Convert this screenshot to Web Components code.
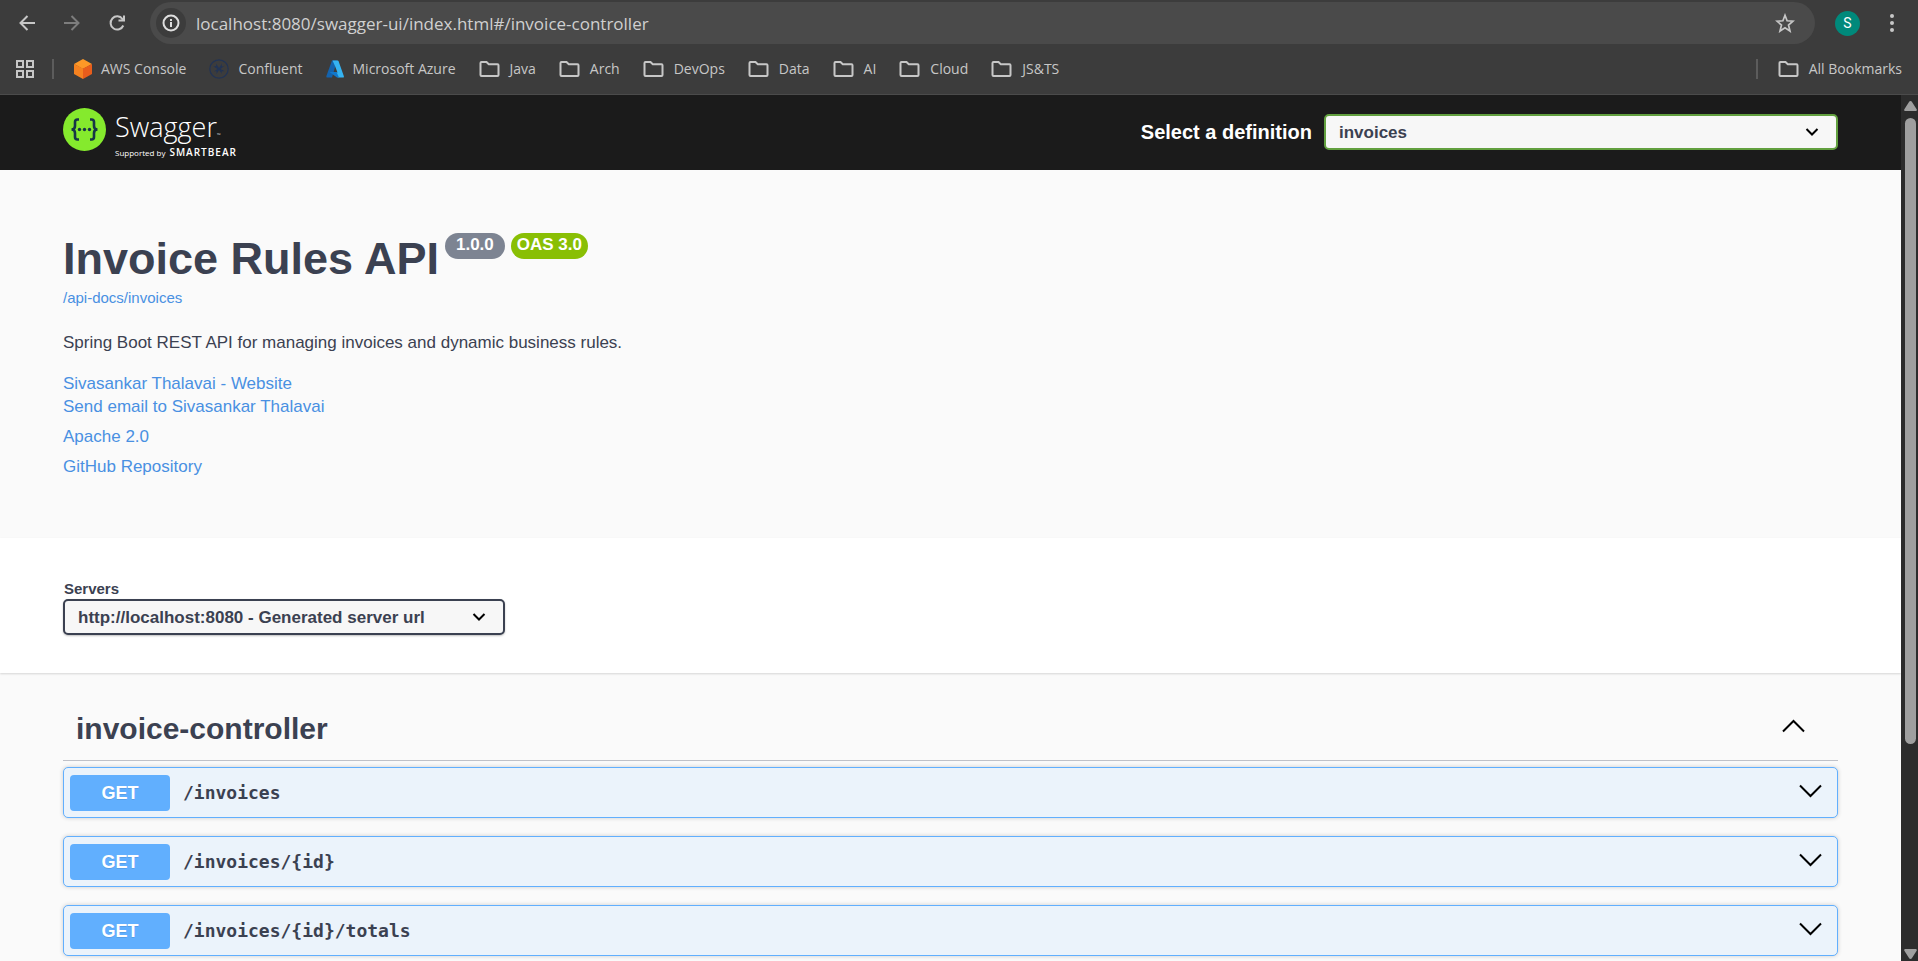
<!DOCTYPE html>
<html lang="en">
<head>
<meta charset="utf-8">
<title>Swagger UI</title>
<style>
html, body { margin: 0; height: 100%; }
body { font-family: "Liberation Sans", Arial, sans-serif; color: #3b4151; background: #fafafa; overflow: hidden; }
</style>
</head>
<body>
<app-window>
  <browser-toolbar slot="chrome"></browser-toolbar>
  <bookmarks-bar slot="chrome"></bookmarks-bar>
  <swagger-topbar></swagger-topbar>
  <api-info></api-info>
  <server-picker></server-picker>
  <tag-section name="invoice-controller">
    <op-block method="GET">/invoices</op-block>
    <op-block method="GET">/invoices/{id}</op-block>
    <op-block method="GET">/invoices/{id}/totals</op-block>
  </tag-section>
  <scroll-track slot="track"></scroll-track>
</app-window>
<script>
const define = (name, html) => customElements.define(name, class extends HTMLElement {
  constructor() {
    super();
    const t = document.createElement('template');
    t.innerHTML = html(this);
    this.attachShadow({ mode: 'open' }).append(t.content.cloneNode(true));
  }
});

define('app-window', () => `
<style>
:host { display: flex; flex-direction: column; height: 100vh; }
header { background: #3c3c3c; border-bottom: 1px solid #4b4b4b; flex: none; }
.view { flex: 1; min-height: 0; display: flex; }
main { flex: 1; min-width: 0; overflow: hidden; background: #fafafa; }
</style>
<header><slot name="chrome"></slot></header>
<div class="view"><main><slot></slot></main><slot name="track"></slot></div>`);

define('browser-toolbar', () => `
<style>
:host { display: flex; align-items: center; height: 42px; padding: 2px 11px 0 12px; }
button { border: 0; padding: 0; background: none; color: #c7c7c7; display: grid; place-items: center; width: 30px; height: 30px; flex: none; }
.nav { display: flex; gap: 15px; margin-right: 18px; }
.dim { color: #7d7d7d; }
svg { display: block; fill: none; stroke: currentColor; stroke-width: 2; }
.omni { flex: 1; display: flex; align-items: center; height: 42px; border-radius: 21px; background: #4a4a4a; padding: 0 15px 0 6px; }
.info { border-radius: 50%; background: #3c3c3c; color: #dedede; }
input { flex: 1; min-width: 0; border: 0; outline: 0; background: none; padding: 0; margin: 0 10px; height: 30px; font: 17px "Open Sans", "Noto Sans", sans-serif; color: #d0d0d0; }
.avatar { width: 25px; height: 25px; border-radius: 50%; background: #00897b; color: #fff; font: 14px "Roboto", sans-serif; margin-left: 20px; }
.menu { margin-left: 17px; }
</style>
<div class="nav">
<button aria-label="Back"><svg width="20" height="20" viewBox="0 0 20 20"><path d="M18 10H4M10.500 3L3.500 10L10.500 17"/></svg></button>
<button class="dim" aria-label="Forward"><svg width="20" height="20" viewBox="0 0 20 20"><path d="M2 10H16M9.500 3L16.500 10L9.500 17"/></svg></button>
<button aria-label="Reload"><svg width="20" height="20" viewBox="0 0 20 20"><path d="M16.300 12.500A6.600 6.600 0 1 1 15.500 6L16.500 7.200M17 2.500V7.500H11.500"/></svg></button>
</div>
<div class="omni">
<button class="info" aria-label="Site information"><svg width="18" height="18" viewBox="0 0 18 18"><circle cx="9" cy="9" r="7.500"/><path d="M9 8V13M9 5V7"/></svg></button>
<input aria-label="Address" value="localhost:8080/swagger-ui/index.html#/invoice-controller">
<button aria-label="Bookmark this page"><svg width="20" height="20" viewBox="0 0 20 20" style="stroke-width:1.700"><path d="M10 2.300L12.100 7.800L18 8.200L13.500 12L15 18L10 14.700L5 18L6.500 12L2 8.200L7.900 7.800Z"/></svg></button>
</div>
<button class="avatar" aria-label="Profile">S</button>
<button class="menu" aria-label="Menu"><svg width="6" height="20" viewBox="0 0 6 20" style="fill:currentColor;stroke:none"><circle cx="3" cy="3" r="2"/><circle cx="3" cy="10" r="2"/><circle cx="3" cy="17" r="2"/></svg></button>`);

const icons = {
  folder: '<svg width="21" height="18" viewBox="0 0 21 18" fill="none" stroke="#c7c7c7" stroke-width="2"><path d="M2.500 2H7.500L9.800 4.300H18.500Q19.500 4.300 19.500 5.300V15Q19.500 16 18.500 16H2.500Q1.500 16 1.500 15V3Q1.500 2 2.500 2Z"/></svg>',
  aws: '<svg width="18" height="20" viewBox="0 0 18 20"><path fill="#fd9827" d="M9 0L18 5L9 10L0 5Z"/><path fill="#f58220" d="M0 5L9 9.500V20L0 15Z"/><path fill="#e85d1c" d="M18 5L9 9.500V20L18 15Z"/></svg>',
  confluent: '<svg width="20" height="20" viewBox="0 0 20 20" fill="none" stroke="#223354"><circle cx="10" cy="10" r="9.200" stroke-width="1.200"/><path fill="#223354" stroke="none" d="M4.500 7.500L7 7L7 4.500L10 9L13 4.500L12.800 7.500L15.500 6.800L11.500 10L15.500 12L12.500 12.500L13 15L10 11L7.500 15L7.500 12L4.800 12.500L8.500 10Z"/></svg>',
  azure: '<svg width="18" height="20" viewBox="0 0 18 20"><path fill="#1463ad" d="M6 1.500H11L6 18.500H1.200Q0 18.500 .4 17Z"/><path fill="#35b3f2" d="M6.500 1.500H11.600Q12.400 1.500 12.600 2.200L17.800 17Q18.200 18.500 17 18.500H12L6 13.500H11.500L9 7Z"/><path fill="#1178cc" d="M3.500 13H10.500L13 18.500H11Z"/></svg>'
};

define('bookmark-link', el => `
<style>
:host { display: block; }
a { display: flex; align-items: center; gap: 9px; color: #c7c7c7; text-decoration: none; font: 14px/20px "Open Sans", "Noto Sans", sans-serif; white-space: nowrap; }
:host([icon="folder"]) a { gap: 10px; }
svg { display: block; flex: none; }
</style>
<a href="#">${icons[el.getAttribute('icon')]}<span><slot></slot></span></a>`);

define('bookmarks-bar', () => `
<style>
:host { display: flex; align-items: center; height: 50px; padding: 0 16px; }
button { border: 0; padding: 0; background: none; color: #c7c7c7; }
svg { display: block; }
i { width: 2px; height: 20px; background: #5c5c5c; margin: 0 20px 0 18px; }
nav { flex: 1; display: flex; gap: 23px; }
</style>
<button aria-label="Apps"><svg width="18" height="18" viewBox="0 0 18 18" fill="none" stroke="currentColor" stroke-width="2"><path d="M1 1H7V7H1ZM11 1H17V7H11ZM1 11H7V17H1ZM11 11H17V17H11Z"/></svg></button>
<i></i>
<nav>
<bookmark-link icon="aws">AWS Console</bookmark-link>
<bookmark-link icon="confluent">Confluent</bookmark-link>
<bookmark-link icon="azure">Microsoft Azure</bookmark-link>
<bookmark-link icon="folder">Java</bookmark-link>
<bookmark-link icon="folder">Arch</bookmark-link>
<bookmark-link icon="folder">DevOps</bookmark-link>
<bookmark-link icon="folder">Data</bookmark-link>
<bookmark-link icon="folder">AI</bookmark-link>
<bookmark-link icon="folder">Cloud</bookmark-link>
<bookmark-link icon="folder">JS&amp;TS</bookmark-link>
</nav>
<i></i>
<bookmark-link icon="folder">All Bookmarks</bookmark-link>`);

const page = `.wrap { box-sizing: border-box; max-width: 1825px; margin: 0 auto; padding: 0 25px; }`;
const selectCss = `
.pick { display: grid; align-items: center; }
.pick select, .pick svg { grid-area: 1 / 1; }
.pick svg { justify-self: end; margin-right: 19px; pointer-events: none; }
select { appearance: none; box-sizing: border-box; width: 100%; height: 36px; margin: 0; padding: 0 48px 0 13px; border: 2px solid #3b4151; border-radius: 5px; background: #f7f7f7; color: #3b4151; font: bold 17px/23px "Liberation Sans", Arial, sans-serif; box-shadow: 0 1px 2px rgba(0,0,0,.25); }`;
const caret = '<svg width="14" height="10" viewBox="0 0 14 10" fill="none" stroke="#000" stroke-width="2"><path d="M1.500 2L7 7.500L12.500 2"/></svg>';

define('swagger-topbar', () => `
<style>${page}${selectCss}
:host { display: block; background: #1b1b1b; padding: 13px 0 12px; }
.wrap { display: flex; align-items: flex-start; }
.logo { flex: 1; display: flex; gap: 9px; height: 50px; color: #fff; text-decoration: none; font-family: "Open Sans", sans-serif; }
.logo b { display: block; font-weight: 300; font-size: 27px; line-height: 38px; }
.logo small { display: flex; align-items: baseline; gap: 4px; font-size: 8px; line-height: 12px; }
.logo strong { font-size: 10px; letter-spacing: 1px; font-weight: 600; }
.logo em { font-style: normal; font-size: 5px; line-height: 0; }
form { flex: 1; display: flex; align-items: center; margin-top: 6px; }
label { color: #fff; font: bold 20px/24px "Liberation Sans", Arial, sans-serif; white-space: nowrap; margin-left: auto; margin-right: 12px; }
.pick { width: 514px; }
select { border-color: #62a03f; box-shadow: none; }
</style>
<div class="wrap">
<a class="logo" href="#" aria-label="Swagger">
<svg width="43" height="43" viewBox="0 0 43 43"><circle cx="21.500" cy="21.500" r="21.500" fill="#85ea2d"/><g fill="none" stroke="#173647" stroke-width="2.600"><path d="M16 11.500H14.500Q12 11.500 12 14V18Q12 21.500 8.500 21.500Q12 21.500 12 25V29Q12 31.500 14.500 31.500H16"/><path d="M27 11.500H28.500Q31 11.500 31 14V18Q31 21.500 34.500 21.500Q31 21.500 31 25V29Q31 31.500 28.500 31.500H27"/></g><g fill="#173647"><circle cx="16.500" cy="21.500" r="1.700"/><circle cx="21.500" cy="21.500" r="1.700"/><circle cx="26.500" cy="21.500" r="1.700"/></g></svg>
<span><b>Swagger<em>™</em></b><small>Supported by <strong>SMARTBEAR</strong></small></span>
</a>
<form><label for="def">Select a definition</label><div class="pick"><select id="def"><option>invoices</option></select>${caret}</div></form>
</div>`);

define('api-info', () => `
<style>${page}
:host { display: block; padding: 63px 0 60px; }
h1 { display: flex; align-items: flex-start; margin: 0 0 4px; font-size: 45px; line-height: 52px; }
h1 span { box-sizing: border-box; height: 26px; margin-left: 6px; padding: 0 11px; border-radius: 13px; background: #7d8492; color: #fff; font-size: 17px; line-height: 24px; }
h1 .oas { background: #89bf04; padding: 0 6px; }
a { color: #4990e2; text-decoration: none; }
.wrap > a { display: block; width: max-content; font-size: 15px; line-height: 18px; }
p { margin: 25px 0 18px; font-size: 17px; line-height: 22px; }
ul { list-style: none; margin: 0; padding: 0; font-size: 17px; line-height: 23px; display: grid; gap: 7px; }
li a { display: block; width: max-content; }
</style>
<div class="wrap">
<h1>Invoice Rules API <span>1.0.0</span><span class="oas">OAS 3.0</span></h1>
<a href="#">/api-docs/invoices</a>
<p>Spring Boot REST API for managing invoices and dynamic business rules.</p>
<ul>
<li><a href="#">Sivasankar Thalavai - Website</a><a href="#">Send email to Sivasankar Thalavai</a></li>
<li><a href="#">Apache 2.0</a></li>
<li><a href="#">GitHub Repository</a></li>
</ul>
</div>`);

define('server-picker', () => `
<style>${page}${selectCss}
:host { display: block; background: #fff; padding: 42px 0 38px; box-shadow: 0 1px 2px rgba(0,0,0,.15); }
label { display: block; margin: 0 0 1px 1px; font-size: 15px; line-height: 18px; font-weight: bold; }
.pick { width: 442px; }
</style>
<div class="wrap"><label for="srv">Servers</label><div class="pick"><select id="srv"><option>http://localhost:8080 - Generated server url</option></select>${caret}</div></div>`);

define('tag-section', el => `
<style>${page}
:host { display: block; padding-top: 39px; }
h2 { margin: 0 0 6px; padding: 0 33px 14px 13px; border-bottom: 1px solid #bfc1c8; display: flex; align-items: flex-start; justify-content: space-between; font-size: 30px; line-height: 34px; }
button { border: 0; padding: 0; background: none; height: 28px; width: 23px; }
svg { display: block; }
.ops { display: grid; gap: 18px; }
</style>
<div class="wrap">
<h2>${el.getAttribute('name')}<button aria-label="Collapse operations"><svg width="23" height="14" viewBox="0 0 23 14" fill="none" stroke="#000" stroke-width="2"><path d="M1 12.500L11.500 2L22 12.500"/></svg></button></h2>
<div class="ops"><slot></slot></div>
</div>`);

define('op-block', el => `
<style>
:host { display: block; }
button { display: flex; align-items: center; width: 100%; height: 51px; box-sizing: border-box; margin: 0; padding: 0 15px 0 6px; border: 1px solid #61affe; border-radius: 5px; background: #ebf3fb; box-shadow: 0 0 4px rgba(0,0,0,.19); color: #3b4151; text-align: left; }
b { width: 100px; height: 36px; border-radius: 4px; background: #61affe; color: #fff; text-align: center; font: bold 18px/36px "Liberation Sans", Arial, sans-serif; text-shadow: 0 1px 0 rgba(0,0,0,.1); }
code { flex: 1; margin-left: 13px; font: bold 18px/24px "DejaVu Sans Mono", monospace; }
svg { display: block; margin-bottom: 4px; }
</style>
<button><b>${el.getAttribute('method')}</b><code><slot></slot></code><svg width="23" height="14" viewBox="0 0 23 14" fill="none" stroke="#000" stroke-width="2"><path d="M1 1.500L11.500 12L22 1.500"/></svg></button>`);

define('scroll-track', () => `
<style>
:host { display: flex; flex-direction: column; align-items: center; width: 17px; box-sizing: border-box; padding: 6px 0 2px 2px; background: #2c2c2c; flex: none; }
svg { display: block; flex: none; }
.lane { flex: 1; margin: 7px 0; display: flex; }
.thumb { width: 11px; height: 76%; border-radius: 6px; background: #9f9f9f; }
</style>
<svg width="13" height="10" viewBox="0 0 13 10" fill="#9f9f9f"><path d="M6.500 0Q7.500 0 8 1L12.800 8.500Q13 10 12 10H1Q0 10 .2 8.500L5 1Q5.500 0 6.500 0Z"/></svg>
<div class="lane"><div class="thumb"></div></div>
<svg width="13" height="10" viewBox="0 0 13 10" fill="#9f9f9f"><path d="M6.500 10Q7.500 10 8 9L12.800 1.500Q13 0 12 0H1Q0 0 .2 1.500L5 9Q5.500 10 6.500 10Z"/></svg>`);
</script>
</body>
</html>
